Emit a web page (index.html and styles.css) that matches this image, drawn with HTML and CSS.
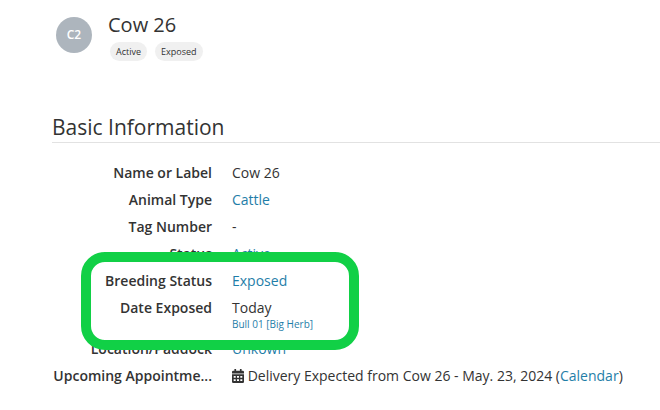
FILE: index.html
```html
<!DOCTYPE html>
<html lang="en">
<head>
  <meta charset="UTF-8" />
  <meta name="viewport" content="width=device-width, initial-scale=1.0"/>
  <title>Cow 26</title>
  <link rel="stylesheet" href="styles.css">
</head>
<body>

  <header class="animal-header">
    <div class="avatar">C2</div>
    <div>
      <h1>Cow 26</h1>
      <div class="tags">
        <span class="tag">Active</span>
        <span class="tag">Exposed</span>
      </div>
    </div>
  </header>

  <main>
    <h2>Basic Information</h2>

    <dl class="details">
      <div class="row">
        <dt>Name or Label</dt>
        <dd>Cow 26</dd>
      </div>
      <div class="row">
        <dt>Animal Type</dt>
        <dd><a href="#">Cattle</a></dd>
      </div>
      <div class="row">
        <dt>Tag Number</dt>
        <dd>-</dd>
      </div>
      <div class="row">
        <dt>Status</dt>
        <dd><a href="#">Active</a></dd>
      </div>
      <div class="row highlight">
        <dt>Breeding Status</dt>
        <dd><a href="#">Exposed</a></dd>
      </div>
      <div class="row">
        <dt>Date Exposed</dt>
        <dd>Today <a class="sire" href="#">Bull 01 [Big Herb]</a></dd>
      </div>
      <div class="row">
        <dt>Location/Paddock</dt>
        <dd><a href="#">Unkown</a></dd>
      </div>
      <div class="row">
        <dt title="Upcoming Appointments">Upcoming Appointme...</dt>
        <dd>
          <svg class="icon" viewBox="0 0 12 14" aria-hidden="true">
            <path fill-rule="evenodd" d="M2.4 0h1.7v1.7h3.8V0h1.7v1.7h1.2q1.2 0 1.2 1.2v1.5H0V2.9q0-1.2 1.2-1.2h1.2zM0 5.2h12v7.6q0 1.2-1.2 1.2H1.2Q0 14 0 12.8zM1.7 7v1.7h2V7zM5 7v1.7h2V7zM8.3 7v1.7h2V7zM1.7 10.3V12h2v-1.7zM5 10.3V12h2v-1.7zM8.3 10.3V12h2v-1.7z"/>
          </svg>
          Delivery Expected from Cow 26 - May. 23, 2024 (<a href="#">Calendar</a>)
        </dd>
      </div>
    </dl>
  </main>

</body>
</html>
```
FILE: styles.css
```css
body {
  margin: 0;
  padding: 12px 0 0 52px;
  font-family: "Open Sans", sans-serif;
  font-size: 14px;
  line-height: 27px;
  color: #333;
  background: #fff;
}
h1, h2 {
  margin: 0;
  font-weight: 400;
}
h1 {
  font-size: 20px;
  line-height: 26px;
}
h2 {
  font-size: 21px;
  line-height: 30px;
  border-bottom: 1px solid #e2e2e2;
}
a {
  color: #1f7ea8;
  text-decoration: none;
}
.animal-header {
  display: flex;
  gap: 16px;
  padding-left: 4px;
  margin-bottom: 51px;
}
.avatar {
  width: 36px;
  height: 36px;
  margin-top: 5px;
  border-radius: 50%;
  background: #adb5bd;
  color: #fff;
  font-size: 12px;
  font-weight: 600;
  line-height: 36px;
  text-align: center;
}
.tags {
  display: flex;
  gap: 8px;
  margin-top: 4px;
  padding-left: 2px;
}
.tag {
  padding: 0 6px;
  border-radius: 10px;
  background: #f0f0f0;
  font-size: 9px;
  line-height: 19px;
}
.details {
  margin: 16px 0 0;
}
.row {
  display: grid;
  grid-template-columns: 160px 1fr;
  column-gap: 20px;
}
dt {
  font-weight: 600;
  text-align: right;
  white-space: nowrap;
}
dd {
  margin: 0;
}
.sire {
  display: block;
  margin-top: -3px;
  padding-bottom: 5px;
  font-size: 10px;
  line-height: 12px;
}
.icon {
  width: 12px;
  height: 14px;
  vertical-align: -2px;
  fill: #333;
}

/* green marker around the breeding rows */
.highlight {
  position: relative;
}
.highlight::after {
  content: "";
  position: absolute;
  top: -15px;
  left: 29px;
  width: 258px;
  height: 78px;
  border: 10px solid #11d046;
  border-radius: 24px;
}
```
